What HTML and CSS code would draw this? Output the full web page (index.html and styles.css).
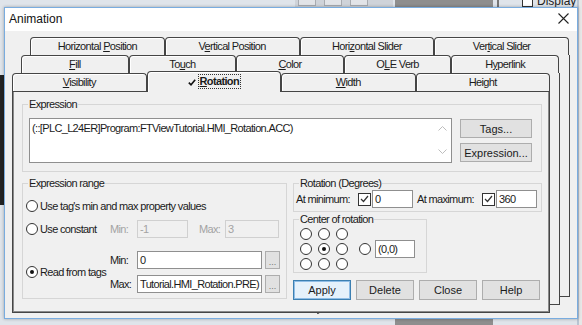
FILE: index.html
```html
<!DOCTYPE html>
<html lang="en">
<head>
    <meta charset="UTF-8">
    <title>Animation</title>
    <link rel="stylesheet" href="styles.css">
</head>
<body>
    <div class="desktop">
        <!-- bits of the editor behind the dialog -->
        <div class="bg-tools">
            <span class="bg-btn"></span>
            <span class="bg-btn"></span>
            <span class="bg-btn"></span>
        </div>
        <div class="bg-bar bg-bar-top"></div>
        <div class="bg-bar bg-bar-bottom"></div>
        <div class="bg-sep"></div>
        <div class="bg-display"><span class="bg-check"></span>Display</div>
        <div class="bg-left"></div>
        <div class="bg-right"></div>

        <div class="dialog">
            <div class="titlebar">
                <span>Animation</span>
                <svg width="11" height="11" viewBox="0 0 11 11"><path d="M0.5 0.5 L10.5 10.5 M10.5 0.5 L0.5 10.5" stroke="#222" stroke-width="1.1"/></svg>
            </div>

            <div class="tabctl">
                <div class="page page-back"></div>
                <div class="page page-mid"></div>

                <div class="tabrow row1">
                    <div class="tab">Horizontal <u>P</u>osition</div>
                    <div class="tab">V<u>e</u>rtical Position</div>
                    <div class="tab">Hori<u>z</u>ontal Slider</div>
                    <div class="tab">Ver<u>t</u>ical Slider</div>
                </div>
                <div class="tabrow row2">
                    <div class="tab"><u>F</u>ill</div>
                    <div class="tab">To<u>u</u>ch</div>
                    <div class="tab"><u>C</u>olor</div>
                    <div class="tab">O<u>L</u>E Verb</div>
                    <div class="tab">H<u>y</u>perlink</div>
                </div>
                <div class="tabrow row3">
                    <div class="tab"><u>V</u>isibility</div>
                    <div class="tab sel">
                        <svg class="tick" width="8" height="7" viewBox="0 0 8 7"><path d="M0.8 3.6 L3 5.8 L7.2 0.8" fill="none" stroke="#111" stroke-width="1.6"/></svg>
                        <span class="focus"><u>R</u>otation</span>
                    </div>
                    <div class="tab"><u>W</u>idth</div>
                    <div class="tab">Hei<u>g</u>ht</div>
                </div>

                <div class="page page-front">
                    <fieldset class="grp">
                        <legend>Expression</legend>
                        <div class="expr-body">
                            <div class="textbox">
                                <span class="textbox-text">(::[PLC_L24ER]Program:FTViewTutorial.HMI_Rotation.ACC)</span>
                                <div class="vscroll">
                                    <svg width="9" height="5" viewBox="0 0 9 5"><path d="M0.5 4.5 L4.5 0.5 L8.5 4.5" fill="none" stroke="#bdbdbd"/></svg>
                                    <svg width="9" height="5" viewBox="0 0 9 5"><path d="M0.5 0.5 L4.5 4.5 L8.5 0.5" fill="none" stroke="#bdbdbd"/></svg>
                                </div>
                            </div>
                            <div class="side-btns">
                                <button class="btn btn-side">Tags...</button>
                                <button class="btn btn-side">Expression...</button>
                            </div>
                        </div>
                    </fieldset>

                    <div class="lower">
                        <fieldset class="grp grp-range">
                            <legend>Expression range</legend>
                            <div class="range-body">
                                <div class="opt opt-first"><span class="radio"></span>Use tag's min and max property values</div>

                                <div class="range-row">
                                    <div class="opt opt-col"><span class="radio"></span>Use constant</div>
                                    <span class="lbl off">Min:</span>
                                    <span class="field off field-min">-1</span>
                                    <span class="lbl off lbl-max">Max:</span>
                                    <span class="field off field-max">3</span>
                                </div>

                                <div class="range-row tags-row">
                                    <div class="opt opt-col"><span class="radio on"></span>Read from tags</div>
                                    <div class="tag-col">
                                        <div class="tag-line">
                                            <span class="lbl">Min:</span>
                                            <span class="field field-tag">0</span>
                                            <button class="btn btn-dots">...</button>
                                        </div>
                                        <div class="tag-line">
                                            <span class="lbl">Max:</span>
                                            <span class="field field-tag field-end"><span>Tutorial.HMI_Rotation.PRE)</span></span>
                                            <button class="btn btn-dots">...</button>
                                        </div>
                                    </div>
                                </div>
                            </div>
                        </fieldset>

                        <div class="right-col">
                            <fieldset class="grp grp-rot">
                                <legend>Rotation (Degrees)</legend>
                                <div class="rot-body">
                                    <span class="lbl-at">At minimum:</span>
                                    <span class="check"><svg width="9" height="8" viewBox="0 0 9 8"><path d="M1 4 L3.5 6.5 L8 1" fill="none" stroke="#333" stroke-width="1.2"/></svg></span>
                                    <span class="field field-deg">0</span>
                                    <span class="lbl-at lbl-at-max">At maximum:</span>
                                    <span class="check"><svg width="9" height="8" viewBox="0 0 9 8"><path d="M1 4 L3.5 6.5 L8 1" fill="none" stroke="#333" stroke-width="1.2"/></svg></span>
                                    <span class="field field-deg">360</span>
                                </div>
                            </fieldset>

                            <fieldset class="grp grp-center">
                                <legend>Center of rotation</legend>
                                <div class="center-body">
                                    <div class="radio-grid">
                                        <span class="radio"></span><span class="radio"></span><span class="radio"></span>
                                        <span class="radio"></span><span class="radio on"></span><span class="radio"></span>
                                        <span class="radio"></span><span class="radio"></span><span class="radio"></span>
                                    </div>
                                    <span class="radio radio-custom"></span>
                                    <span class="field field-point">(0,0)</span>
                                </div>
                            </fieldset>

                            <div class="actions">
                                <button class="btn btn-act btn-default">Apply</button>
                                <button class="btn btn-act">Delete</button>
                                <button class="btn btn-act">Close</button>
                                <button class="btn btn-act">Help</button>
                            </div>
                        </div>
                    </div>
                </div>
            </div>
        </div>

        <svg class="cursor" width="12" height="19" viewBox="0 0 12 19"><path d="M0.5 0.5 L0.5 15 L4 11.8 L6.6 17.5 L8.6 16.6 L6 11 L10.5 11 Z" fill="#fff" stroke="#111" stroke-width="1"/></svg>
    </div>
</body>
</html>
```

FILE: styles.css
```css
* {
    box-sizing: border-box;
}

body {
    margin: 0;
    font-family: "Liberation Sans", Arial, sans-serif;
    font-size: 11px;
    color: #1b1b1b;
    background: #dfe4ea;
}

.desktop {
    position: relative;
    width: 582px;
    height: 325px;
    overflow: hidden;
    background: #dfe4ea;
}

/* background pieces */
.bg-tools {
    position: absolute;
    left: 295px;
    top: 0;
    width: 98px;
    height: 7px;
    display: flex;
    gap: 8px;
    padding-left: 3px;
    background: #cfd3d9;
}

.bg-btn {
    width: 18px;
    height: 6px;
    background: #e2e4e8;
    border: 1px solid #a8abb0;
    border-top: none;
}

.bg-bar {
    position: absolute;
    left: 395px;
    width: 98px;
    background: #8e8e8e;
}

.bg-bar-top {
    top: 0;
    height: 7px;
}

.bg-bar-bottom {
    top: 319px;
    height: 6px;
}

.bg-sep {
    position: absolute;
    left: 497px;
    top: 0;
    width: 2px;
    height: 7px;
    background: #777;
}

.bg-display {
    position: absolute;
    left: 522px;
    top: -5px;
    display: flex;
    align-items: center;
    gap: 4px;
    font-size: 12px;
    line-height: 13px;
    color: #222;
}

.bg-check {
    width: 11px;
    height: 11px;
    border: 1px solid #333;
    background: #fff;
}

.bg-left {
    position: absolute;
    left: 0;
    top: 75px;
    width: 4px;
    height: 130px;
    background: #222;
}

.bg-right {
    position: absolute;
    left: 577px;
    top: 0;
    width: 5px;
    height: 325px;
    background: #e7e7e7;
    border-left: 2px solid #b8c4d2;
}

.cursor {
    position: absolute;
    left: 311px;
    top: 296px;
}

/* dialog window */
.dialog {
    position: absolute;
    left: 4px;
    top: 7px;
    width: 574px;
    height: 312px;
    background: #f0f0f0;
    border: 1px solid #79acdf;
    box-shadow: 0 0 3px rgba(0, 0, 0, 0.3);
}

.titlebar {
    height: 23px;
    background: #fff;
    display: flex;
    align-items: center;
    justify-content: space-between;
    padding: 0 8px 2px 4px;
    font-size: 12px;
    color: #111;
}

/* tab control */
.tabctl {
    position: relative;
    margin: 6px 0 0 7px;
    width: 558px;
    height: 276px;
    letter-spacing: -0.65px;
}

.tabrow {
    position: relative;
    display: flex;
    height: 18px;
    z-index: 1;
}

.row1 {
    margin-left: 18px;
    width: 539px;
}

.row2 {
    margin-left: 9px;
    width: 538px;
}

.row3 {
    width: 538px;
    z-index: 3;
}

.tab {
    flex: 1;
    min-width: 0;
    border: 1px solid #454545;
    border-bottom: none;
    border-radius: 4px 4px 0 0;
    background: #f0f0f0;
    box-shadow: inset 1px 1px 0 #fff;
    text-align: center;
    line-height: 17px;
    white-space: nowrap;
}

.tab.sel {
    position: relative;
    margin-top: -2px;
    height: 21px;
    line-height: 19px;
    font-weight: bold;
    display: flex;
    justify-content: center;
    align-items: center;
    gap: 3px;
    padding-bottom: 1px;
}

.tick {
    margin-top: 1px;
}

.focus {
    outline: 1px dotted #333;
    line-height: 13px;
    padding: 0 1px;
}

.page {
    position: absolute;
    border: 1px solid #454545;
    background: #f0f0f0;
}

.page-back {
    left: 18px;
    top: 18px;
    width: 540px;
    height: 242px;
    border-top: none;
    border-left: none;
}

.page-mid {
    left: 9px;
    top: 36px;
    width: 539px;
    height: 232px;
    border-top: none;
    border-left: none;
}

.page-front {
    position: relative;
    z-index: 2;
    width: 538px;
    height: 222px;
    padding: 6px 7px 0 9px;
    box-shadow: inset 1px 0 0 #8a8a8a, inset -1px -1px 0 #8a8a8a;
}

/* group boxes */
.grp {
    margin: 0;
    padding: 0;
    min-width: 0;
    border: 1px solid #d6d6d6;
}

.grp legend {
    margin-left: 5px;
    padding: 0 1px;
    line-height: 13px;
}

.expr-body {
    display: flex;
    gap: 8px;
    padding: 7px 9px 8px 6px;
}

.textbox {
    flex: 1;
    display: flex;
    height: 45px;
    background: #fff;
    border: 1px solid #8f8f8f;
}

.textbox-text {
    flex: 1;
    padding: 3px 0 0 2px;
    white-space: nowrap;
}

.vscroll {
    width: 17px;
    display: flex;
    flex-direction: column;
    justify-content: space-between;
    align-items: center;
    padding: 7px 0 8px;
}

.side-btns {
    display: flex;
    flex-direction: column;
    gap: 5px;
    margin-top: 1px;
}

.btn {
    font: inherit;
    color: #1b1b1b;
    background: #e1e1e1;
    border: 1px solid #adadad;
    padding: 0;
}

.btn-side {
    width: 72px;
    height: 19px;
}

.lower {
    display: grid;
    grid-template-columns: 265px 249px;
    gap: 6px;
    align-items: start;
    margin-top: 5px;
}

/* expression range */
.range-body {
    padding: 8px 0 5px 3px;
}

.opt {
    display: flex;
    align-items: center;
    gap: 2px;
    height: 16px;
    white-space: nowrap;
}

.opt-col {
    width: 84px;
    flex: none;
}

.radio {
    position: relative;
    flex: none;
    width: 12px;
    height: 12px;
    border: 1px solid #333;
    border-radius: 50%;
    background: #fff;
}

.radio.on::after {
    content: '';
    position: absolute;
    left: 3px;
    top: 3px;
    width: 4px;
    height: 4px;
    border-radius: 50%;
    background: #111;
}

.range-row {
    display: flex;
    align-items: center;
    height: 18px;
    margin-top: 6px;
}

.tags-row {
    height: auto;
    margin-top: 13px;
}

.lbl {
    width: 27px;
    flex: none;
}

.lbl-max {
    margin-left: 11px;
    width: 26px;
}

.off {
    color: #a3a3a3;
}

.field {
    flex: none;
    height: 18px;
    line-height: 16px;
    padding: 0 2px;
    background: #fff;
    border: 1px solid #8f8f8f;
    white-space: nowrap;
    overflow: hidden;
}

.field.off {
    background: #f0f0f0;
    border-color: #d0d0d0;
}

.field-min {
    width: 51px;
}

.field-max {
    width: 54px;
}

.tag-col {
    display: flex;
    flex-direction: column;
    gap: 6px;
}

.tag-line {
    display: flex;
    align-items: center;
}

.field-tag {
    width: 125px;
}

/* long tag name is scrolled to its end */
.field-end {
    display: flex;
    justify-content: flex-end;
}

.field-end span {
    flex: none;
}

.btn-dots {
    width: 15px;
    height: 18px;
    margin-left: 3px;
    line-height: 20px;
    font-size: 9px;
    color: #777;
}

/* rotation */
.right-col {
    display: flex;
    flex-direction: column;
}

.rot-body {
    display: flex;
    align-items: center;
    height: 21px;
    padding: 0 0 3px 2px;
}

.lbl-at {
    width: 62px;
    flex: none;
    white-space: nowrap;
}

.lbl-at-max {
    margin-left: 4px;
    width: 65px;
}

.check {
    flex: none;
    width: 13px;
    height: 13px;
    margin-right: 1px;
    border: 1px solid #333;
    background: #fff;
    display: flex;
    align-items: center;
    justify-content: center;
}

.field-deg {
    width: 41px;
}

.grp-center {
    width: 134px;
    margin-top: 1px;
}

.center-body {
    display: flex;
    align-items: center;
    padding: 2px 0 2px 6px;
}

.radio-grid {
    display: grid;
    grid-template-columns: repeat(3, 12px);
    grid-auto-rows: 12px;
    gap: 3px 6px;
}

.radio-custom {
    margin-left: 11px;
}

.field-point {
    width: 40px;
    margin-left: 4px;
}

.actions {
    display: flex;
    gap: 5px;
    margin-top: 7px;
}

.btn-act {
    width: 58px;
    height: 20px;
}

.btn-default {
    background: #e5f1fb;
    border-color: #3c7fb1;
    box-shadow: inset 0 0 0 1px #8fbde6;
}
```
